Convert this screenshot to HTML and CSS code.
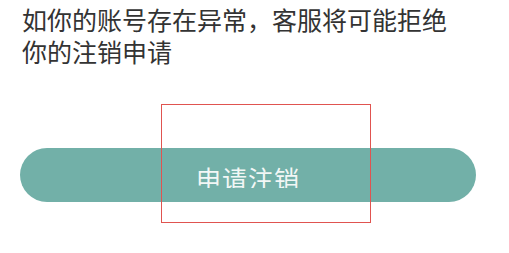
FILE: index.html
```html
<!DOCTYPE html>
<html lang="zh-CN">
<head>
<meta charset="utf-8">
<link rel="stylesheet" href="styles.css">
</head>
<body>
<div class="page">
  <p class="notice">如你的账号存在异常，客服将可能拒绝<br>你的注销申请</p>
  <div class="btn"><span class="btn-label">申请注销</span></div>
  <div class="highlight"></div>
</div>
</body>
</html>
```
FILE: styles.css
```css
html, body {
  margin: 0;
  padding: 0;
  background: #ffffff;
}
.page {
  position: relative;
  width: 509px;
  height: 253px;
  overflow: hidden;
  font-family: "Noto Sans CJK SC", "Noto Sans", sans-serif;
}
.notice {
  margin: 0;
  padding: 3px 0 0 22px;
  font-size: 25px;
  line-height: 32px;
  color: #333333;
  white-space: nowrap;
}
.btn {
  margin: 81px 0 0 20px;
  width: 456px;
  height: 54px;
  border-radius: 27px;
  background: #72b0a8;
  display: flex;
  justify-content: center;
  align-items: flex-start;
  padding-top: 18px;
  box-sizing: border-box;
}
.btn-label {
  display: block;
  height: 22px;
  overflow: hidden;
  font-size: 25px;
  line-height: 25px;
  color: #f2f7f6;
  letter-spacing: 1px;
}
.highlight {
  position: absolute;
  left: 161px;
  top: 104px;
  width: 210px;
  height: 119px;
  box-sizing: border-box;
  border: 1.5px solid #e05450;
}
```
